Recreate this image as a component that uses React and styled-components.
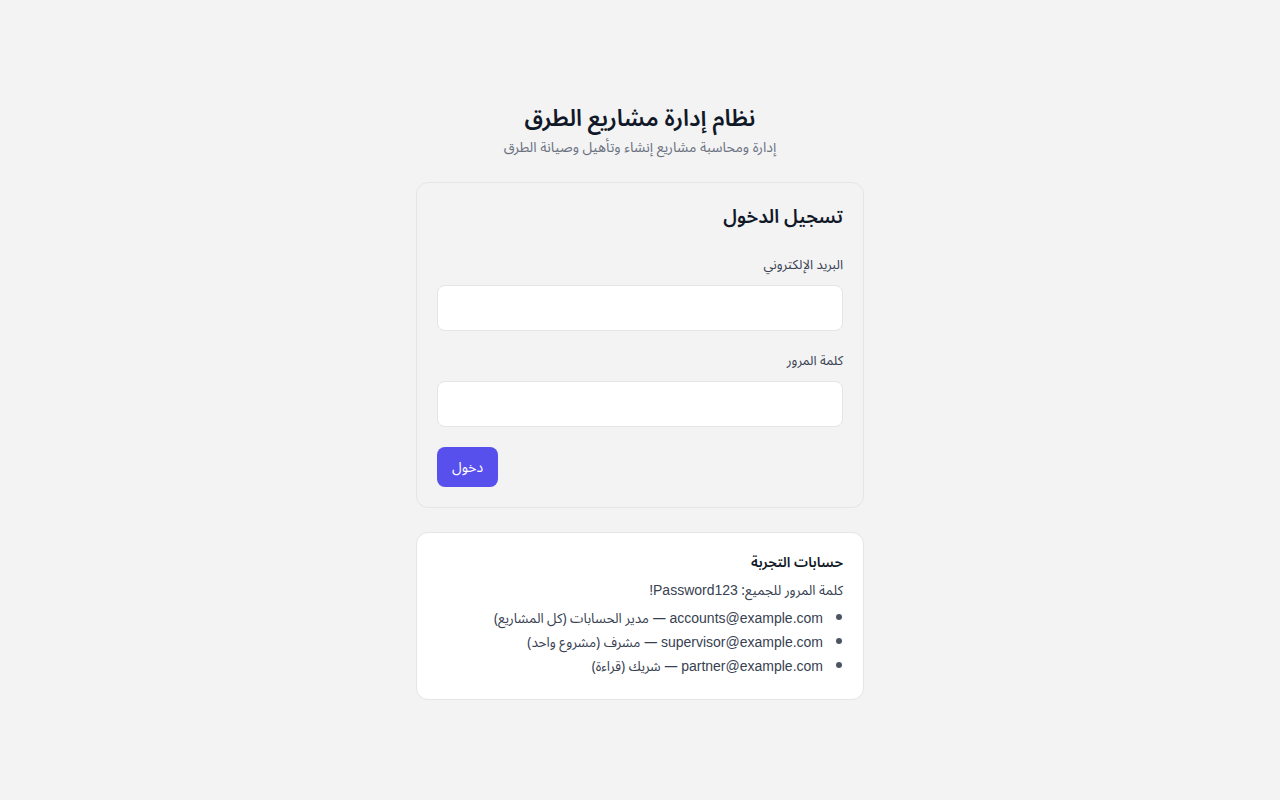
import React from "react";
import styled, { createGlobalStyle } from "styled-components";

const GlobalStyle = createGlobalStyle`
  html, body {
    margin: 0;
    background: #f3f3f4;
  }
  body {
    font-family: "Noto Sans Arabic", "Noto Sans", "DejaVu Sans", sans-serif;
    color: #111827;
  }
  * {
    box-sizing: border-box;
  }
`;

const Page = styled.div`
  min-height: 800px;
  direction: rtl;
  display: flex;
  justify-content: center;
  padding-top: 103px;
`;

const Column = styled.div`
  width: 448px;
  display: flex;
  flex-direction: column;
  gap: 24px;
`;

const Header = styled.header`
  text-align: center;
  display: flex;
  flex-direction: column;
  gap: 3px;
`;

const Title = styled.h1`
  margin: 0;
  font-size: 23px;
  line-height: 32px;
  font-weight: 600;
  color: #111827;
`;

const Subtitle = styled.p`
  margin: 0;
  font-size: 14px;
  line-height: 20px;
  color: #6b7280;
`;

const Card = styled.section`
  display: flex;
  flex-direction: column;
  border: 1px solid #e4e5e8;
  border-radius: 12px;
  padding: 20px;
  background: ${(p) => (p.$white ? "#ffffff" : "#f3f3f4")};
`;

const CardTitle = styled.h2`
  margin: 0 0 24px;
  font-size: 19px;
  line-height: 28px;
  font-weight: 600;
`;

const Field = styled.div`
  display: flex;
  flex-direction: column;
  gap: 10px;
  margin-bottom: 20px;
`;

const Label = styled.label`
  font-size: 13px;
  line-height: 20px;
  color: #374151;
`;

const Input = styled.input`
  height: 46px;
  width: 100%;
  border: 1px solid #e4e5e8;
  border-radius: 8px;
  background: #ffffff;
  padding: 0 12px;
  font: inherit;
  outline: none;
`;

const Submit = styled.button`
  align-self: flex-end;
  height: 40px;
  padding: 0 15px;
  border: none;
  border-radius: 8px;
  background: #5850ec;
  color: #ffffff;
  font: inherit;
  font-size: 14px;
  cursor: pointer;
`;

const InfoTitle = styled.h3`
  margin: 0 0 8px;
  font-size: 14px;
  line-height: 20px;
  font-weight: 600;
`;

const InfoText = styled.p`
  margin: 0 0 6px;
  font-size: 13.5px;
  line-height: 20px;
  color: #374151;
`;

const AccountList = styled.ul`
  margin: 0;
  padding: 0 20px 0 0;
  font-size: 13.5px;
  line-height: 24px;
  color: #374151;

  li {
    height: 24px;
  }

  li::marker {
    color: #4b5563;
  }
`;

const Mail = styled.span`
  font-family: "Liberation Sans", "Noto Sans", sans-serif;
  font-size: 14px;
  line-height: 1;
`;

const accounts = [
  { mail: "accounts@example.com", role: "مدير الحسابات (كل المشاريع)" },
  { mail: "supervisor@example.com", role: "مشرف (مشروع واحد)" },
  { mail: "partner@example.com", role: "شريك (قراءة)" },
];

const App = () => (
  <>
    <GlobalStyle />
    <Page>
      <Column>
        <Header>
          <Title>نظام إدارة مشاريع الطرق</Title>
          <Subtitle>إدارة ومحاسبة مشاريع إنشاء وتأهيل وصيانة الطرق</Subtitle>
        </Header>
        <Card>
          <CardTitle>تسجيل الدخول</CardTitle>
          <Field>
            <Label>البريد الإلكتروني</Label>
            <Input type="email" />
          </Field>
          <Field>
            <Label>كلمة المرور</Label>
            <Input type="password" />
          </Field>
          <Submit>دخول</Submit>
        </Card>
        <Card $white>
          <InfoTitle>حسابات التجربة</InfoTitle>
          <InfoText>
            كلمة المرور للجميع: <Mail>Password123!</Mail>
          </InfoText>
          <AccountList>
            {accounts.map((a) => (
              <li key={a.mail}>
                <Mail>{a.mail}</Mail> — {a.role}
              </li>
            ))}
          </AccountList>
        </Card>
      </Column>
    </Page>
  </>
);

export default App;
